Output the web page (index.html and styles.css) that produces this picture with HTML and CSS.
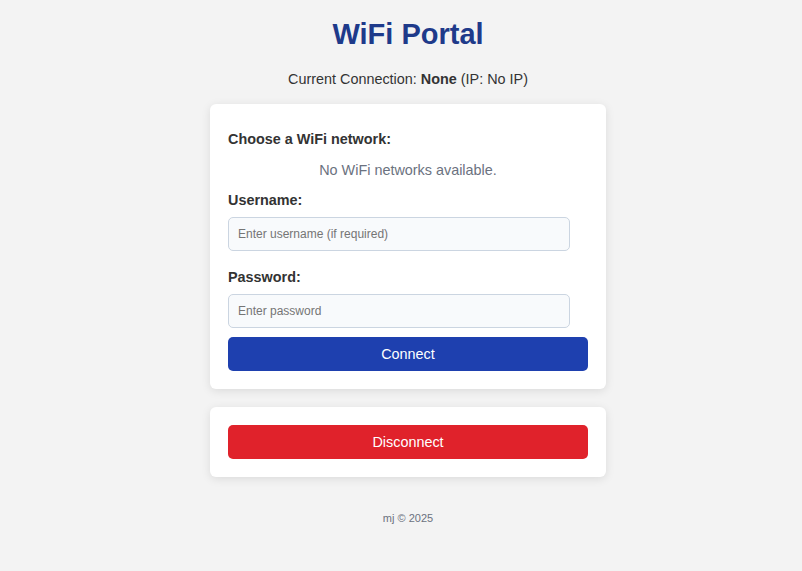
FILE: index.html
```html
<!DOCTYPE html>
<html>
<head>
<meta charset="utf-8">
<title>WiFi Portal</title>
<link rel="stylesheet" href="styles.css">
</head>
<body>
<main class="page">
  <h1 class="title">WiFi Portal</h1>
  <p class="status">Current Connection: <strong>None</strong> (IP: No IP)</p>
  <section class="card">
    <label class="label label-first">Choose a WiFi network:</label>
    <p class="empty">No WiFi networks available.</p>
    <label class="label label-user" for="u">Username:</label>
    <input class="input" id="u" type="text" placeholder="Enter username (if required)">
    <label class="label label-pass" for="p">Password:</label>
    <input class="input" id="p" type="password" placeholder="Enter password">
    <button class="btn btn-connect">Connect</button>
  </section>
  <section class="card card-small">
    <button class="btn btn-disconnect">Disconnect</button>
  </section>
  <footer class="footer">mj © 2025</footer>
</main>
</body>
</html>
```
FILE: styles.css
```css
* { box-sizing: border-box; }
html, body { margin: 0; padding: 0; }
body {
  background: #f3f3f3;
  font-family: "Liberation Sans", Arial, sans-serif;
  color: #333333;
  padding-left: 14px;
}
.page {
  width: 396px;
  margin: 0 auto;
  display: flex;
  flex-direction: column;
}
.title {
  margin: 17px 0 0;
  font-size: 29px;
  line-height: 34px;
  font-weight: bold;
  color: #1e3a8a;
  text-align: center;
}
.status {
  margin: 20px 0 0;
  font-size: 14.4px;
  line-height: 17px;
  text-align: center;
  color: #333333;
}
.card {
  margin-top: 16px;
  background: #ffffff;
  border-radius: 6px;
  padding: 18px;
  box-shadow: 0 2px 10px rgba(0, 0, 0, 0.1);
  display: flex;
  flex-direction: column;
}
.card-small { margin-top: 18px; }
.label {
  display: block;
  font-size: 14.4px;
  line-height: 17px;
  font-weight: bold;
  color: #333333;
}
.label-first { margin-top: 9px; }
.label-user { margin-top: 13px; }
.label-pass { margin-top: 18px; }
.empty {
  margin: 14px 0 0;
  font-size: 14.4px;
  line-height: 17px;
  color: #6b7280;
  text-align: center;
}
.input {
  margin-top: 8px;
  width: 95%;
  height: 34px;
  padding: 0 9px;
  border: 1px solid #cbd5e1;
  border-radius: 5px;
  background: #f8fafc;
  font-family: "Liberation Sans", Arial, sans-serif;
  font-size: 12px;
  color: #333;
}
.input::placeholder { color: #757575; }
.btn {
  width: 100%;
  height: 34px;
  border: none;
  border-radius: 5px;
  color: #ffffff;
  font-family: "Liberation Sans", Arial, sans-serif;
  font-size: 14.4px;
  cursor: pointer;
}
.btn-connect {
  margin-top: 9px;
  background: #1e40af;
}
.btn-disconnect {
  background: #e0222b;
}
.footer {
  margin-top: 35px;
  font-size: 11px;
  line-height: 13px;
  color: #6b7280;
  text-align: center;
}
```
